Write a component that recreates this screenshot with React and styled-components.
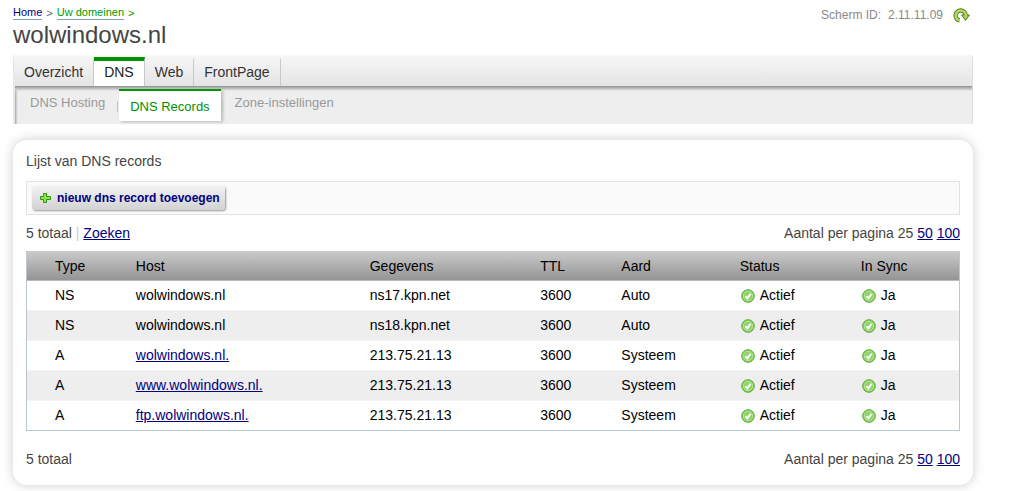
import React from 'react';
import styled, { createGlobalStyle, css } from 'styled-components';

const GlobalStyle = createGlobalStyle`
  body {
    margin: 0;
    background: #fff;
    color: #444;
    font-family: "Liberation Sans", Arial, sans-serif;
    font-size: 14px;
    line-height: 18px;
  }
  a {
    color: #000080;
  }
`;

const Page = styled.div`
  padding: 5px 46px 6px 13px;
`;

const Header = styled.header`
  display: flex;
  justify-content: space-between;
  align-items: flex-start;
  height: 50px;
`;

const Crumbs = styled.nav`
  display: flex;
  gap: 4px;
  padding-top: 1px;
  font-size: 11px;
  line-height: 16px;
  color: #666;
`;

const Crumb = styled.a`
  line-height: 13px;
  text-decoration: none;
  border-bottom: 1px solid #7aa5b5;
  color: ${props => props.$current ? '#090' : '#000080'};
`;

const CrumbArrow = styled.span`
  line-height: 14px;
  color: ${props => props.$current ? '#090' : '#666'};
`;

const Title = styled.h1`
  margin: 0;
  font-size: 24px;
  line-height: 30px;
  font-weight: 400;
`;

const ScreenId = styled.div`
  display: flex;
  align-items: center;
  font-size: 12px;
  line-height: 20px;
  color: #888;
  padding-right: 3px;

  span {
    margin: 0 10px 0 7px;
  }
`;

const IconButton = styled.button`
  display: flex;
  padding: 0;
  border: 0;
  background: none;
  cursor: pointer;
`;

const TabBar = styled.nav`
  display: flex;
  height: 31px;
  padding-top: 2px;
  box-sizing: border-box;
  border-left: 1px solid #e6e6e6;
  border-right: 1px solid #ddd;
  border-radius: 4px 4px 0 0;
  background: linear-gradient(#f7f7f7, #e4e4e4);
`;

const Tab = styled.a`
  padding: 1px 10px 0;
  border-top: 4px solid transparent;
  border-right: 1px solid #c8c8c8;
  line-height: 20px;
  color: #333;
  text-decoration: none;

  ${props => props.$active &&
    css`
      border-top-color: #009100;
      background: #fff;
      color: #222;
    `
  }
`;

const SubBar = styled.nav`
  display: flex;
  align-items: flex-start;
  height: 38px;
  padding: 3px 0 0 4px;
  box-sizing: border-box;
  border-left: 2px solid #e6e6e6;
  border-right: 1px solid #ddd;
  background:
    linear-gradient(#919191, #b5b5b5 2px, #dcdcdc 4px, transparent 5px),
    linear-gradient(90deg, #a8a8a8, #ddd 2px, #eee 3px);
`;

const SubTab = styled.a`
  padding: 5px 11px 0;
  font-size: 13px;
  line-height: 18px;
  color: #999;
  text-decoration: none;

  ${props => props.$active &&
    css`
      height: 32px;
      padding-top: 7px;
      box-sizing: border-box;
      border-top: 2px solid #009a00;
      background: #fff;
      color: #009100;
      box-shadow: 2px 1px 3px #bbb;
    `
  }
`;

const SubDivider = styled.span`
  width: 1px;
  height: 11px;
  margin: 12px 1px 0;
  background: #c4c4c4;
`;

const Panel = styled.main`
  margin-top: 16px;
  padding: 12px 13px 17px;
  border-radius: 14px;
  background: #fff;
  box-shadow: 0 0 12px #ccc;
`;

const PanelTitle = styled.h2`
  margin: 0 0 11px;
  font-size: 14px;
  line-height: 18px;
  font-weight: 400;
`;

const Toolbar = styled.div`
  display: flex;
  padding: 4px 5px;
  height: 34px;
  box-sizing: border-box;
  border: 1px solid #e2e2e2;
  background: #fafafa;
`;

const AddButton = styled.button`
  display: flex;
  align-items: center;
  gap: 6px;
  height: 24px;
  padding: 0 5px 0 7px;
  border: 0;
  border-radius: 3px;
  background: linear-gradient(#f2f2f2, #d2d2d2);
  box-shadow: 1px 1px 2px #999;
  color: #000080;
  font-family: inherit;
  font-size: 12px;
  font-weight: 700;
  cursor: pointer;
`;

const ListInfo = styled.div`
  display: flex;
  justify-content: space-between;
  line-height: 18px;
  margin: ${props => props.$bottom ? '19px 0 0' : '9px 0'};
`;

const Divider = styled.span`
  color: #ccc;
`;

const Records = styled.table`
  width: 100%;
  table-layout: fixed;
  border-collapse: separate;
  border-spacing: 0;
  box-sizing: border-box;
  border: 1px solid #b9c8cf;
  border-top: 0;
  color: #000;

  thead tr {
    background: linear-gradient(#cbcbcb, #929292);
  }
  tbody tr:nth-child(even) {
    background: #eee;
  }
  th, td {
    height: 30px;
    box-sizing: border-box;
    padding: 0 0 0 10px;
    border-bottom: 1px solid #f4f4f4;
    font-weight: 400;
    text-align: left;
  }
  th {
    border-bottom-color: #bbb;
  }
  td {
    padding-bottom: 2px;
  }
  tbody tr:last-child td {
    height: 29px;
    border-bottom: 0;
  }
  th:first-child, td:first-child {
    padding-left: 28px;
  }
`;

const Col = styled.col`
  width: ${props => props.$width};
`;

const State = styled.span`
  display: flex;
  align-items: center;
  gap: 5px;
  padding-left: 1px;

  svg {
    margin-top: 2px;
  }
`;

const RefreshIcon = () => (
  <svg width="17" height="15" viewBox="0 0 17 15" aria-hidden="true">
    <path d="M6.6 12.4A5 5 0 1 1 12.6 7.6" fill="none" stroke="#56782a" strokeWidth="4.4" />
    <path d="M8.6 7h7.8l-3.9 5.4z" fill="#a5cf48" stroke="#56782a" strokeLinejoin="round" />
    <path d="M6.6 12.4A5 5 0 1 1 12.6 8.6" fill="none" stroke="#b4dc5a" strokeWidth="2.6" />
  </svg>
);

const PlusIcon = () => (
  <svg width="12" height="12" viewBox="0 0 12 12" aria-hidden="true">
    <path d="M4.5 1.5h3v3h4v3h-4v3h-3v-3h-3v-3h3z" fill="#8ee04c" stroke="#2a9d10" />
  </svg>
);

const CheckIcon = () => (
  <svg width="14" height="14" viewBox="0 0 14 14" aria-hidden="true">
    <circle cx="7" cy="7" r="6.3" fill="#7ac850" stroke="#62ac38" />
    <circle cx="7" cy="7" r="4.8" fill="#8fd468" stroke="#b9e69c" strokeWidth="1" />
    <path d="M4.4 7.2l2 2.2L9.6 4.8" fill="none" stroke="#fff" strokeWidth="2" />
  </svg>
);

const columns = [
  { label: 'Type', width: '10.6%' },
  { label: 'Host', width: '25.1%' },
  { label: 'Gegevens', width: '18.3%' },
  { label: 'TTL', width: '8.7%' },
  { label: 'Aard', width: '12.7%' },
  { label: 'Status', width: '13%' },
  { label: 'In Sync', width: 'auto' },
];

const records = [
  { type: 'NS', host: 'wolwindows.nl', data: 'ns17.kpn.net', kind: 'Auto' },
  { type: 'NS', host: 'wolwindows.nl', data: 'ns18.kpn.net', kind: 'Auto' },
  { type: 'A', host: 'wolwindows.nl.', data: '213.75.21.13', kind: 'Systeem', link: true },
  { type: 'A', host: 'www.wolwindows.nl.', data: '213.75.21.13', kind: 'Systeem', link: true },
  { type: 'A', host: 'ftp.wolwindows.nl.', data: '213.75.21.13', kind: 'Systeem', link: true },
];

function PageSize() {
  return (
    <div>
      Aantal per pagina 25 <a href='#50'>50</a> <a href='#100'>100</a>
    </div>
  );
}

function App() {
  return (
    <>
      <GlobalStyle />
      <Page>
        <Header>
          <div>
            <Crumbs>
              <Crumb href='#home'>Home</Crumb>
              <CrumbArrow>&gt;</CrumbArrow>
              <Crumb href='#domeinen' $current>Uw domeinen</Crumb>
              <CrumbArrow $current>&gt;</CrumbArrow>
            </Crumbs>
            <Title>wolwindows.nl</Title>
          </div>
          <ScreenId>
            Scherm ID: <span>2.11.11.09</span>
            <IconButton type='button' aria-label='Vernieuwen'><RefreshIcon /></IconButton>
          </ScreenId>
        </Header>

        <TabBar>
          <Tab href='#overzicht'>Overzicht</Tab>
          <Tab href='#dns' $active>DNS</Tab>
          <Tab href='#web'>Web</Tab>
          <Tab href='#frontpage'>FrontPage</Tab>
        </TabBar>
        <SubBar>
          <SubTab href='#hosting'>DNS Hosting</SubTab>
          <SubDivider />
          <SubTab href='#records' $active>DNS Records</SubTab>
          <SubDivider />
          <SubTab href='#zone'>Zone-instellingen</SubTab>
        </SubBar>

        <Panel>
          <PanelTitle>Lijst van DNS records</PanelTitle>
          <Toolbar>
            <AddButton type='button'><PlusIcon />nieuw dns record toevoegen</AddButton>
          </Toolbar>
          <ListInfo>
            <div>5 totaal <Divider>|</Divider> <a href='#zoeken'>Zoeken</a></div>
            <PageSize />
          </ListInfo>
          <Records>
            <colgroup>
              {columns.map(column => <Col key={column.label} $width={column.width} />)}
            </colgroup>
            <thead>
              <tr>
                {columns.map(column => <th key={column.label} scope='col'>{column.label}</th>)}
              </tr>
            </thead>
            <tbody>
              {records.map((record, index) => (
                <tr key={index}>
                  <td>{record.type}</td>
                  <td>{record.link ? <a href={`#record-${index}`}>{record.host}</a> : record.host}</td>
                  <td>{record.data}</td>
                  <td>3600</td>
                  <td>{record.kind}</td>
                  <td><State><CheckIcon />Actief</State></td>
                  <td><State><CheckIcon />Ja</State></td>
                </tr>
              ))}
            </tbody>
          </Records>
          <ListInfo $bottom>
            <div>5 totaal</div>
            <PageSize />
          </ListInfo>
        </Panel>
      </Page>
    </>
  );
}

export default App;
